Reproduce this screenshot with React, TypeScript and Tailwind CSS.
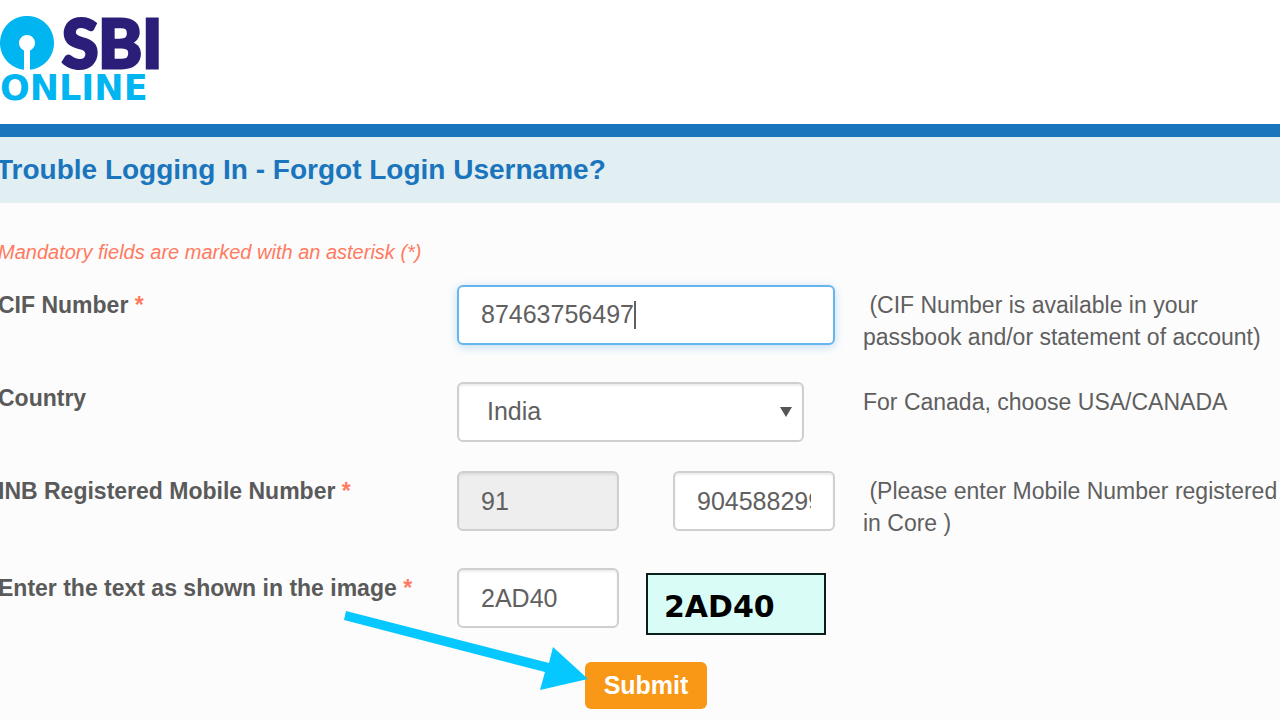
import type { ReactNode } from "react";

const FIELD =
  "h-[60px] min-w-0 rounded-md border-2 border-[#cfcfcf] px-[22px] text-[25px] text-[#606060] shadow-[inset_0_2px_2px_rgba(0,0,0,0.07)] outline-none";

function Row({
  id,
  label,
  required,
  hint,
  labelClass = "pt-1",
  children,
}: {
  id: string;
  label: string;
  required?: boolean;
  hint?: ReactNode;
  labelClass?: string;
  children: ReactNode;
}) {
  return (
    <div className="grid grid-cols-[minmax(0,457fr)_minmax(0,378fr)_minmax(0,445fr)] items-start">
      <label
        htmlFor={id}
        className={`-ml-0.5 whitespace-nowrap text-[23px] leading-8 font-bold text-[#5a5a5a] ${labelClass}`}
      >
        {label}
        {required && <span className="text-[#ff7a60]"> *</span>}
      </label>
      {children}
      {hint && (
        <p className="pt-1 pl-7 text-[23px] leading-8 whitespace-nowrap text-[#5f5f5f]">
          {hint}
        </p>
      )}
    </div>
  );
}

function Logo() {
  return (
    <div className="pt-4">
      <div className="flex h-[54px] items-center gap-2">
        <svg viewBox="0 0 54 54" className="size-[54px] shrink-0" aria-hidden="true">
          <path
            fill="#00b5f0"
            d="M24 53.8A27 27 0 1 1 30 53.8V34.4A8 8 0 1 0 24 34.4Z"
          />
        </svg>
        <span className="font-['Lato',sans-serif] text-[66px] leading-[54px] font-black text-[#2a1e78] [-webkit-text-stroke:3px_#2a1e78]">
          SBI
        </span>
      </div>
      <div className="mt-px font-['DejaVu_Sans',sans-serif] text-[35px] leading-[34px] font-bold text-[#00b5f0]">
        ONLINE
      </div>
    </div>
  );
}

export default function App() {
  return (
    <div className="min-h-screen overflow-x-hidden bg-[#fcfcfc] font-['Liberation_Sans',Arial,sans-serif]">
      <header className="h-[124px] bg-white">
        <Logo />
      </header>
      <div className="border-t-[13px] border-[#1b75bc] bg-[#e1eef2]">
        <h1 className="-ml-1 py-[17px] text-[28px] leading-8 font-bold whitespace-nowrap text-[#1b75bc]">
          Trouble Logging In - Forgot Login Username?
        </h1>
      </div>

      <form className="pt-[33px]" onSubmit={(e) => e.preventDefault()}>
        <p className="-ml-0.5 text-xl leading-8 text-[#ff7a60] italic">
          Mandatory fields are marked with an asterisk (*)
        </p>

        <div className="mt-[17px] flex flex-col gap-[29px]">
          <Row
            id="cif"
            label="CIF Number"
            required
            hint={
              <>
                &nbsp;(CIF Number is available in your
                <br />
                passbook and/or statement of account)
              </>
            }
          >
            <div className="flex h-[60px] items-center rounded-md border-2 border-[#66b5ec] bg-white px-[22px] text-[25px] text-[#606060] shadow-[0_2px_10px_rgba(102,175,233,0.4)]">
              <input
                id="cif"
                defaultValue="87463756497"
                className="field-sizing-content bg-transparent outline-none"
              />
              <span className="h-7 w-0.5 bg-[#606060]" />
            </div>
          </Row>

          <Row
            id="country"
            label="Country"
            labelClass=""
            hint="For Canada, choose USA/CANADA"
          >
            <div className="relative w-11/12">
              <select
                id="country"
                className={`${FIELD} w-full appearance-none bg-white pl-7`}
              >
                <option>India</option>
              </select>
              <svg
                viewBox="0 0 12 10"
                className="pointer-events-none absolute top-[25px] right-3 h-2.5 w-3"
                aria-hidden="true"
              >
                <path fill="#555" d="M0 0H12L6 10Z" />
              </svg>
            </div>
          </Row>

          <Row
            id="mobile"
            label="INB Registered Mobile Number"
            required
            hint={
              <>
                &nbsp;(Please enter Mobile Number registered
                <br />
                in Core )
              </>
            }
          >
            <div className="flex justify-between">
              <input
                aria-label="Country code"
                readOnly
                defaultValue="91"
                className={`${FIELD} w-3/7 bg-[#eeeeee]`}
              />
              <input
                id="mobile"
                defaultValue="9045882999"
                className={`${FIELD} w-3/7 bg-white`}
              />
            </div>
          </Row>

          <Row id="captcha" label="Enter the text as shown in the image" required>
            <div className="flex items-start gap-[27px]">
              <input
                id="captcha"
                defaultValue="2AD40"
                className={`${FIELD} w-3/7 bg-white`}
              />
              <div className="mt-[5px] flex h-[62px] w-[180px] items-center border-2 border-[#0c1f1c] bg-[#d9fdf6] pt-1 pl-4 font-['DejaVu_Sans',sans-serif] text-[30px] font-bold text-black">
                2AD40
              </div>
            </div>
          </Row>
        </div>

        <div className="mt-[27px] grid grid-cols-[457fr_823fr] pb-[11px]">
          <div className="relative col-start-2 ml-32 w-[122px]">
            <button
              type="submit"
              className="h-[47px] w-full rounded-md bg-[#f99716] text-[25px] font-bold text-white"
            >
              Submit
            </button>
            <svg
              viewBox="0 0 246 82"
              className="pointer-events-none absolute -top-[52px] -left-[242px] h-[82px] w-[246px]"
              aria-hidden="true"
            >
              <path
                fill="#04c8ff"
                d="M3 1L206 53L210 37L245 69L197 80L202 62L1 10Z"
              />
            </svg>
          </div>
        </div>
      </form>
    </div>
  );
}
